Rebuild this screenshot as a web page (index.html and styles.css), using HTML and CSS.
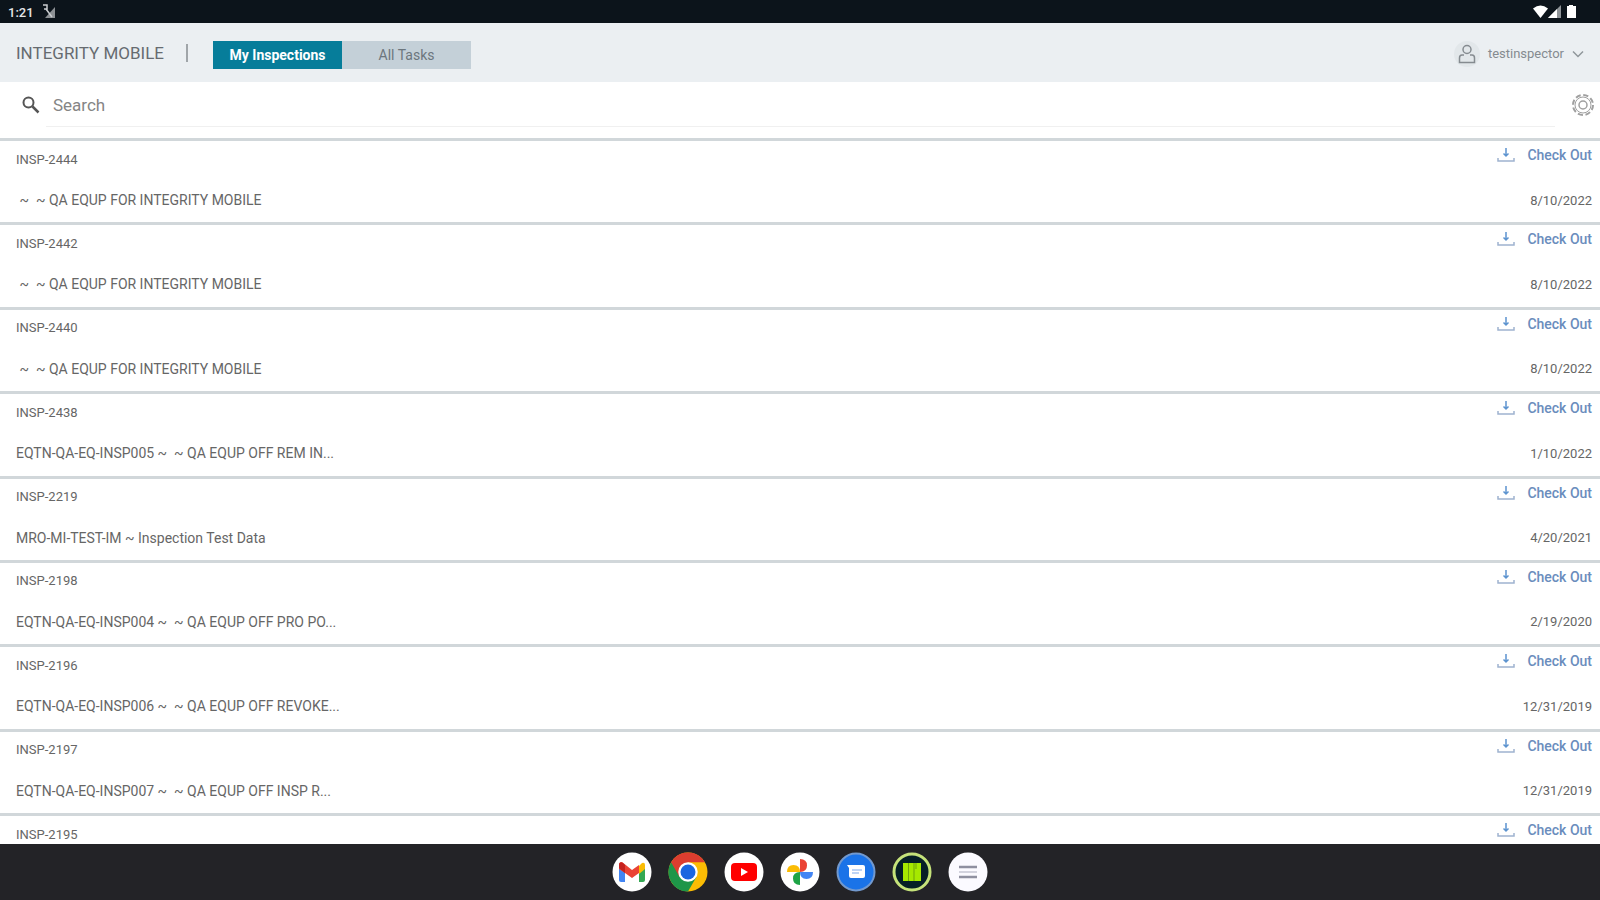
FILE: index.html
```html
<!DOCTYPE html>
<html lang="en">
<head>
  <meta charset="UTF-8">
  <title>Integrity Mobile</title>
  <link rel="stylesheet" href="styles.css">
</head>
<body>

  <!-- shared icons -->
  <svg class="sprite" aria-hidden="true">
    <symbol id="download" viewBox="0 0 18 16">
      <path d="M9 1v8M6.500 6.500L9 9l2.500-2.500" fill="none" stroke="#5c93cf" stroke-width="1.500"/>
      <path d="M1 11v3h16v-3" fill="none" stroke="#9fb3d0" stroke-width="1.500"/>
    </symbol>
  </svg>

  <!-- STATUS BAR -->
  <div class="status-bar">
    <span class="clock">1:21</span>
    <svg width="14" height="16" viewBox="0 0 14 16">
      <path d="M13 3v11H3z" fill="#8d9195"/>
      <path d="M1 1h4v4H2M4 5l6 8" fill="none" stroke="#c9cccf" stroke-width="1.500"/>
    </svg>
    <svg class="status-icons" width="45" height="16" viewBox="0 0 45 16">
      <path d="M0 4.500Q7.500-1.500 15 4.500L7.500 14z" fill="#fff"/>
      <path d="M28 1v13H15z" fill="#8f9498"/>
      <path d="M24 5v9h-9z" fill="#fff"/>
      <path d="M36 1h4v1h3v12h-9V2h2z" fill="#fff"/>
    </svg>
  </div>

  <!-- HEADER -->
  <header class="header">
    <h1>INTEGRITY MOBILE</h1>
    <span class="divider"></span>
    <div class="tabs">
      <button class="tab active">My Inspections</button>
      <button class="tab">All Tasks</button>
    </div>
    <button class="user">
      <span class="avatar">
        <svg width="18" height="20" viewBox="0 0 18 20" fill="none" stroke="#858b90" stroke-width="1.500">
          <circle cx="9" cy="5.500" r="4"/>
          <path d="M6 11H4q-2.500 0-2.500 3v4.500h15V14q0-3-2.500-3h-2"/>
        </svg>
      </span>
      testinspector
      <svg width="12" height="8" viewBox="0 0 12 8">
        <path d="M1 1.500l5 5 5-5" fill="none" stroke="#90969b" stroke-width="1.500"/>
      </svg>
    </button>
  </header>

  <!-- SEARCH -->
  <div class="search">
    <label for="search-box" aria-label="Search">
      <svg width="18" height="18" viewBox="0 0 18 18" fill="none" stroke="#555">
        <circle cx="6.500" cy="6.500" r="5" stroke-width="2"/>
        <path d="M10.500 10.500l6 6" stroke-width="2.500"/>
      </svg>
    </label>
    <input type="text" id="search-box" placeholder="Search">
    <button class="settings" aria-label="Settings">
      <svg width="24" height="24" viewBox="0 0 24 24" fill="none" stroke="#a0a0a0">
        <circle cx="12" cy="12" r="10" stroke-width="2" stroke-dasharray="5.200 2.650"/>
        <circle cx="12" cy="12" r="8"/>
        <circle cx="12" cy="12" r="4" stroke-width="1.500"/>
      </svg>
    </button>
  </div>

  <!-- INSPECTION LIST -->
  <main class="list" id="list"></main>

  <!-- DOCK -->
  <nav class="dock">
    <button aria-label="Gmail">
      <svg viewBox="0 0 40 40">
        <circle cx="20" cy="20" r="19.500" fill="#fff"/>
        <path d="M7 13l6 4v13H9q-2 0-2-2z" fill="#4285f4"/>
        <path d="M33 13l-6 4v13h4q2 0 2-2z" fill="#34a853"/>
        <path d="M27 14l3-3q3-1 3 2v4l-6 5z" fill="#fbbc04"/>
        <path d="M7 17v-4q0-3 3-3l10 8 7-5v8l-7 5-7-5z" fill="#ea4335"/>
        <path d="M7 13q0-4 4-2l2 2v8l-6-5z" fill="#c5221f"/>
      </svg>
    </button>
    <button aria-label="Chrome">
      <svg viewBox="0 0 40 40">
        <circle cx="20" cy="20" r="19.500" fill="#fbbc04"/>
        <path d="M20 20L3.100 10.250A19.500 19.500 0 0 0 20 39.500L28.400 25z" fill="#1e9648"/>
        <path d="M20 20L11.600 25 3.100 10.250A19.500 19.500 0 0 1 36.900 10.250H20z" fill="#dc3d2f"/>
        <circle cx="20" cy="20" r="9.750" fill="#fff"/>
        <circle cx="20" cy="20" r="7.500" fill="#1a66e0"/>
      </svg>
    </button>
    <button aria-label="YouTube">
      <svg viewBox="0 0 40 40">
        <circle cx="20" cy="20" r="19.500" fill="#fff"/>
        <rect x="7" y="11" width="26" height="18" rx="4" fill="#f00"/>
        <path d="M17 16l7 4-7 4z" fill="#fff"/>
      </svg>
    </button>
    <button aria-label="Photos">
      <svg viewBox="0 0 40 40">
        <circle cx="20" cy="20" r="19.500" fill="#fff"/>
        <path d="M20 20V7q7 0 7 6.500T20 20z" fill="#ea4335"/>
        <path d="M20 20h13q0 7-6.500 7T20 20z" fill="#4285f4"/>
        <path d="M20 20v13q-7 0-7-6.500T20 20z" fill="#1ea446"/>
        <path d="M20 20H7q0-7 6.500-7T20 20z" fill="#fbbc04"/>
      </svg>
    </button>
    <button aria-label="Messages">
      <svg viewBox="0 0 40 40">
        <circle cx="20" cy="20" r="18.500" fill="#1a73e8" stroke="#7299ce" stroke-width="2"/>
        <path d="M11 13h16q2 0 2 2v9q0 2-2 2H15q-2 0-2-2v-8z" fill="#fff"/>
        <path d="M16 18h10M16 21h7" stroke="#a9c6f2" stroke-width="1.500"/>
      </svg>
    </button>
    <button aria-label="Integrity">
      <svg viewBox="0 0 40 40">
        <circle cx="20" cy="20" r="18" fill="#061f26" stroke="#c5e27a" stroke-width="3"/>
        <path d="M11 11h18v18H11z" fill="#a6e800"/>
        <path d="M16.500 11v18M22 11v18M24 11v6" stroke="#6fa50a"/>
      </svg>
    </button>
    <button aria-label="All apps">
      <svg viewBox="0 0 40 40">
        <circle cx="20" cy="20" r="19.500" fill="#fbfaff"/>
        <path d="M11 15h18M11 25h18" stroke="#8f90a0" stroke-width="2.500"/>
        <path d="M11 20h18" stroke="#d3d3de" stroke-width="2"/>
      </svg>
    </button>
  </nav>

  <script>
    const inspections = [
      { id: 'INSP-2444', name: ' ~  ~ QA EQUP FOR INTEGRITY MOBILE', date: '8/10/2022' },
      { id: 'INSP-2442', name: ' ~  ~ QA EQUP FOR INTEGRITY MOBILE', date: '8/10/2022' },
      { id: 'INSP-2440', name: ' ~  ~ QA EQUP FOR INTEGRITY MOBILE', date: '8/10/2022' },
      { id: 'INSP-2438', name: 'EQTN-QA-EQ-INSP005 ~  ~ QA EQUP OFF REM IN...', date: '1/10/2022' },
      { id: 'INSP-2219', name: 'MRO-MI-TEST-IM ~ Inspection Test Data', date: '4/20/2021' },
      { id: 'INSP-2198', name: 'EQTN-QA-EQ-INSP004 ~  ~ QA EQUP OFF PRO PO...', date: '2/19/2020' },
      { id: 'INSP-2196', name: 'EQTN-QA-EQ-INSP006 ~  ~ QA EQUP OFF REVOKE...', date: '12/31/2019' },
      { id: 'INSP-2197', name: 'EQTN-QA-EQ-INSP007 ~  ~ QA EQUP OFF INSP R...', date: '12/31/2019' },
      { id: 'INSP-2195' }
    ];

    document.getElementById('list').innerHTML = inspections.map(item => `
      <article class="item">
        <div class="line">
          <span class="item-id">${item.id}</span>
          <button class="checkout">
            <svg width="18" height="16"><use href="#download"/></svg>
            Check Out
          </button>
        </div>
        ${item.name ? `<div class="line">
          <span class="item-name">${item.name}</span>
          <span>${item.date}</span>
        </div>` : ''}
      </article>`).join('');
  </script>
</body>
</html>
```

FILE: styles.css
```css
* {
  box-sizing: border-box;
}

body {
  height: 100vh;
  margin: 0;
  display: flex;
  flex-direction: column;
  font-family: Roboto, sans-serif;
  font-size: 13px;
  color: #666;
  background: #fff;
}

button {
  padding: 0;
  border: none;
  background: none;
  font: inherit;
  color: inherit;
  cursor: pointer;
}

svg {
  display: block;
}

.sprite {
  display: none;
}

/* status bar */
.status-bar {
  flex: none;
  height: 23px;
  padding: 1px 22px 0 8px;
  display: flex;
  align-items: center;
  gap: 8px;
  background: #0c141b;
  color: #e4e6e8;
}

.clock {
  font-weight: 500;
}

.status-icons {
  margin-left: auto;
}

/* header */
.header {
  flex: none;
  height: 59px;
  padding: 0 16px;
  display: flex;
  align-items: center;
  background: #ebeff2;
}

h1 {
  margin: 0;
  font-size: 17px;
  font-weight: 400;
  color: #666b70;
}

.divider {
  width: 2px;
  height: 18px;
  margin: 0 25px 0 22px;
  background: #a0a5a9;
}

.tabs {
  display: flex;
  margin-top: 4px;
}

.tab {
  width: 129px;
  height: 28px;
  font-size: 14px;
  background: #c4d0d8;
  color: #6c767d;
}

.tab.active {
  background: #067d9a;
  color: #fff;
  font-weight: 700;
}

.user {
  margin: 2px 0 0 auto;
  display: flex;
  align-items: center;
  gap: 8px;
  color: #858b90;
}

.avatar {
  width: 26px;
  height: 26px;
  display: flex;
  align-items: center;
  justify-content: center;
  border-radius: 50%;
  background: #e2e7ea;
}

/* search */
.search {
  flex: none;
  height: 56px;
  padding: 0 5px 0 22px;
  display: flex;
  align-items: flex-start;
}

.search label {
  padding-top: 14px;
}

#search-box {
  flex: 1;
  height: 45px;
  margin: 0 16px 0 6px;
  padding: 2px 7px 0;
  border: none;
  border-bottom: 1px solid #f0f0f0;
  outline: none;
  font: 17px Roboto, sans-serif;
  color: #666;
}

#search-box::placeholder {
  color: #858585;
}

.settings {
  padding-top: 11px;
}

/* inspection list */
.list {
  flex: 1;
  min-height: 0;
  overflow: hidden;
  display: flex;
  flex-direction: column;
}

.item {
  flex: 1;
  padding: 5px 8px 0 16px;
  border-top: 3px solid #d1d7da;
}

.item:last-child {
  flex: none;
  height: 31px;
}

.line {
  height: 24px;
  display: flex;
  align-items: center;
  justify-content: space-between;
}

.line + .line {
  margin-top: 18px;
}

.item-id {
  padding-top: 2px;
}

.item-name {
  font-size: 14px;
  white-space: pre;
}

.checkout {
  display: flex;
  align-items: center;
  gap: 12px;
  margin-top: -6px;
  font-size: 14px;
  font-weight: 500;
  color: #6a8dbd;
}

/* dock */
.dock {
  flex: none;
  height: 56px;
  display: flex;
  align-items: center;
  justify-content: center;
  gap: 16px;
  background: #232327;
}

.dock svg {
  width: 40px;
  height: 40px;
}
```
